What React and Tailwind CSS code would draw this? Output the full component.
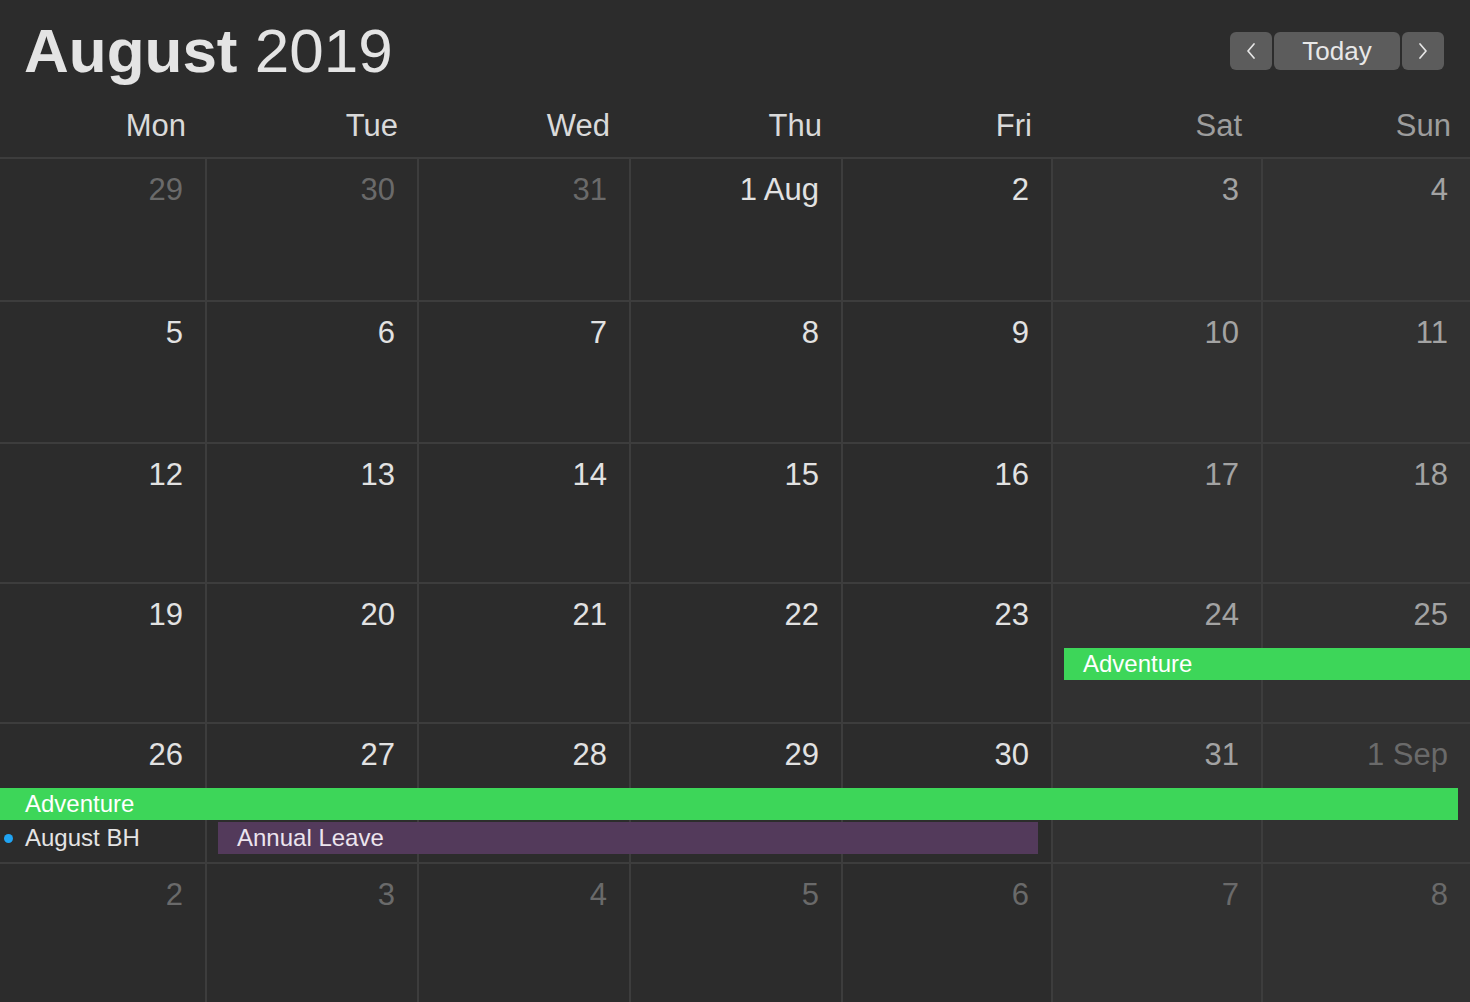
import React from 'react'

const FONT = { fontFamily: '"Liberation Sans", Arial, sans-serif' }

const COLS = 'grid grid-cols-[205px_212px_212px_212px_210px_210px_1fr]'

const dayNames = ['Mon', 'Tue', 'Wed', 'Thu', 'Fri', 'Sat', 'Sun']

// o = other month, w = weekday, e = weekend
const weeks = [
  { h: 'h-[143px]', days: [['29', 'o'], ['30', 'o'], ['31', 'o'], ['1 Aug', 'w'], ['2', 'w'], ['3', 'e'], ['4', 'e']] },
  { h: 'h-[142px]', days: [['5', 'w'], ['6', 'w'], ['7', 'w'], ['8', 'w'], ['9', 'w'], ['10', 'e'], ['11', 'e']] },
  { h: 'h-[140px]', days: [['12', 'w'], ['13', 'w'], ['14', 'w'], ['15', 'w'], ['16', 'w'], ['17', 'e'], ['18', 'e']] },
  { h: 'h-[140px]', days: [['19', 'w'], ['20', 'w'], ['21', 'w'], ['22', 'w'], ['23', 'w'], ['24', 'e'], ['25', 'e']] },
  { h: 'h-[140px]', days: [['26', 'w'], ['27', 'w'], ['28', 'w'], ['29', 'w'], ['30', 'w'], ['31', 'e'], ['1 Sep', 'o']] },
  { h: 'h-[140px]', days: [['2', 'o'], ['3', 'o'], ['4', 'o'], ['5', 'o'], ['6', 'o'], ['7', 'o'], ['8', 'o']] },
]

const numColor = { o: 'text-[#6a6a6a]', w: 'text-[#e2e2e2]', e: 'text-[#a3a3a3]' }

function Chevron({ dir }) {
  return (
    <svg width="12" height="20" viewBox="0 0 12 20" fill="none" stroke="#e6e6e6" strokeWidth="1.7" strokeLinecap="round" strokeLinejoin="round">
      {dir === 'left' ? <path d="M9 3 L3 10 L9 17" /> : <path d="M3 3 L9 10 L3 17" />}
    </svg>
  )
}

function WeekEvents({ index }) {
  if (index === 3) {
    return (
      <div className="absolute left-[1064px] right-0 top-[64px] h-[32px] bg-[#3dd659] flex items-center pl-[19px] text-[24px] leading-none text-white">
        Adventure
      </div>
    )
  }
  if (index === 4) {
    return (
      <>
        <div className="absolute left-0 w-[1458px] top-[64px] h-[32px] bg-[#3dd659] flex items-center pl-[25px] text-[24px] leading-none text-white">
          Adventure
        </div>
        <div className="absolute left-[4px] top-[98px] h-[32px] flex items-center text-[24px] leading-none text-[#e4e4e4]">
          <span className="w-[9px] h-[9px] rounded-full bg-[#20a4f3] mr-[12px]" />
          August BH
        </div>
        <div className="absolute left-[218px] w-[820px] top-[98px] h-[32px] bg-[#533a5b] flex items-center pl-[19px] text-[24px] leading-none text-[#ece4ee]">
          Annual Leave
        </div>
      </>
    )
  }
  return null
}

export default function App() {
  return (
    <div className="w-[1470px] h-[1002px] overflow-hidden bg-[#2c2c2c]" style={FONT}>
      {/* header */}
      <div className="h-[157px] flex flex-col">
        <div className="flex items-start justify-between pt-[20px] pl-[24px] pr-[26px]">
          <h1 className="text-[62px] leading-none text-[#e4e4e4]">
            <span className="font-bold">August</span> <span className="font-normal">2019</span>
          </h1>
          <div className="flex gap-[2px] mt-[12px]">
            <button className="w-[42px] h-[38px] rounded-[6px] bg-[#5c5c5c] flex items-center justify-center">
              <Chevron dir="left" />
            </button>
            <button className="w-[126px] h-[38px] rounded-[6px] bg-[#5c5c5c] text-[26px] leading-none text-[#e8e8e8] flex items-center justify-center">
              Today
            </button>
            <button className="w-[42px] h-[38px] rounded-[6px] bg-[#5c5c5c] flex items-center justify-center">
              <Chevron dir="right" />
            </button>
          </div>
        </div>
        <div className={`${COLS} mt-[28px]`}>
          {dayNames.map((d, i) => (
            <div
              key={d}
              className={`text-right pr-[19px] text-[31px] leading-none ${i >= 5 ? 'text-[#9d9d9d]' : 'text-[#dadada]'}`}
            >
              {d}
            </div>
          ))}
        </div>
      </div>

      {/* weeks */}
      {weeks.map((w, wi) => (
        <div key={wi} className={`relative ${COLS} ${w.h} border-t-2 border-[#3d3d3d]`}>
          {w.days.map(([label, kind], di) => (
            <div
              key={di}
              className={`${di > 0 ? 'border-l-2 border-[#3d3d3d]' : ''} ${di >= 5 ? 'bg-[#313131]' : 'bg-[#2c2c2c]'} text-right pr-[22px] pt-[15px]`}
            >
              <span className={`text-[31px] leading-none ${numColor[kind]}`}>{label}</span>
            </div>
          ))}
          <WeekEvents index={wi} />
        </div>
      ))}
    </div>
  )
}
